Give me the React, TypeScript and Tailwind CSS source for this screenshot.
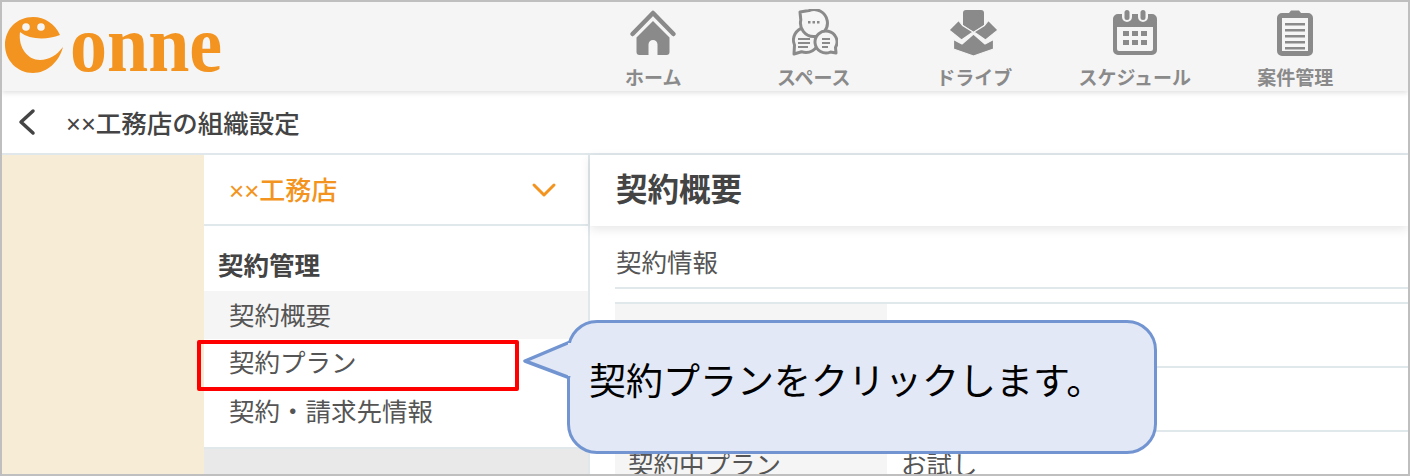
const jp = "font-['Liberation_Sans','Noto_Sans_CJK_JP',sans-serif]";

function HomeIcon() {
  return (
    <svg width="48" height="48" viewBox="0 0 48 48" fill="#8a8a8a">
      <path d="M3.500 25 24 4l20.500 21" fill="none" stroke="#8a8a8a" strokeWidth="4.500" strokeLinecap="round" strokeLinejoin="round" />
      <path d="M24 12 40.500 28.500V43a3 3 0 0 1-3 3H28.500V35.500a4.500 4.500 0 0 0-9 0V46H10.500a3 3 0 0 1-3-3V28.500Z" />
    </svg>
  );
}

function SpaceIcon() {
  return (
    <svg width="48" height="48" viewBox="0 0 48 48" fill="#f5f5f5" stroke="#8a8a8a" strokeWidth="3" strokeLinejoin="round">
      <path d="M4 45 11.500 42.700A12.500 12.500 0 1 0 4.500 36Z" />
      <path d="M10 3 19 1.500A13.500 13.500 0 1 1 10.800 11Z" />
      <path d="M46 44 45.500 38.500A11 11 0 1 0 40.500 43Z" />
      <g stroke="none" fill="#8a8a8a">
        <rect x="18" y="12" width="2.500" height="2.500" />
        <rect x="22.500" y="12" width="2.500" height="2.500" />
        <rect x="27" y="12" width="2.500" height="2.500" />
        <rect x="8" y="29" width="12" height="2" />
        <rect x="8" y="33" width="12" height="2" />
        <rect x="8" y="37" width="10" height="2" />
        <rect x="32" y="29" width="8" height="2" />
        <rect x="32" y="33" width="8" height="2" />
        <rect x="32" y="37" width="6" height="2" />
      </g>
    </svg>
  );
}

function DriveIcon() {
  return (
    <svg width="52" height="48" viewBox="0 0 52 48" fill="#8a8a8a" stroke="#f5f5f5" strokeWidth="1.200" strokeLinejoin="round">
      <path stroke="none" d="M18 1h15a3 3 0 0 1 3 3v12L25.500 23 15 16V4a3 3 0 0 1 3-3Z" />
      <path d="M1 21 10.500 11.500 14.500 16.500 25 23 13.500 31Z" />
      <path d="M50 21 40.500 11.500 36.500 16.500 26 23 37.500 31Z" />
      <path d="M5.500 30.500 14 35 25.500 25 37 35 45.500 30.500V40L25.500 47 5.500 40Z" />
    </svg>
  );
}

function ScheduleIcon() {
  return (
    <svg width="46" height="48" viewBox="0 0 46 48" fill="#8a8a8a">
      <path fillRule="evenodd" d="M6 5h4v3a5 5 0 0 0 10 0V5h6v3a5 5 0 0 0 10 0V5h4a5 5 0 0 1 5 5v31a5 5 0 0 1-5 5H6a5 5 0 0 1-5-5V10a5 5 0 0 1 5-5Zm-1 13v22a2 2 0 0 0 2 2h32a2 2 0 0 0 2-2V18Z" />
      <rect x="12.500" y="1" width="5" height="10" rx="2.500" />
      <rect x="28.500" y="1" width="5" height="10" rx="2.500" />
      <rect x="11" y="22" width="6" height="5" />
      <rect x="20" y="22" width="6" height="5" />
      <rect x="29" y="22" width="6" height="5" />
      <rect x="11" y="31" width="6" height="5" />
      <rect x="20" y="31" width="6" height="5" />
      <rect x="29" y="31" width="6" height="5" />
    </svg>
  );
}

function CaseIcon() {
  return (
    <svg width="38" height="48" viewBox="0 0 38 48" fill="#8a8a8a">
      <path fillRule="evenodd" d="M6 4h7l2-2.500h8L25 4h7a5 5 0 0 1 5 5v33a5 5 0 0 1-5 5H6a5 5 0 0 1-5-5V9a5 5 0 0 1 5-5Zm0 5v33h26V9Z" />
      <rect x="9" y="14" width="20" height="2.500" />
      <rect x="9" y="20" width="20" height="2.500" />
      <rect x="9" y="26" width="20" height="2.500" />
      <rect x="9" y="32" width="20" height="2.500" />
      <rect x="9" y="38" width="20" height="2.500" />
    </svg>
  );
}

const navItems = [
  { label: "ホーム", icon: <HomeIcon /> },
  { label: "スペース", icon: <SpaceIcon /> },
  { label: "ドライブ", icon: <DriveIcon /> },
  { label: "スケジュール", icon: <ScheduleIcon /> },
  { label: "案件管理", icon: <CaseIcon /> },
];

function Logo() {
  return (
    <div className="flex w-[571px] shrink-0 items-start">
      <svg width="68" height="80" viewBox="2 2 68 80" className="shrink-0">
        <path
          d="M33 17C45 17 55 24 60 35 47 40 30 40 20 32 18 48 28 60 40 60 49 60 57 55 63 47 59 62 47 73 33 73 17 73 5 60 5 45 5 29 17 17 33 17Z"
          fill="#f39420"
        />
        <circle cx="26" cy="27" r="3.800" fill="#f5f5f5" />
        <circle cx="41" cy="27" r="3.800" fill="#f5f5f5" />
      </svg>
      <span className="mt-[5px] origin-bottom scale-y-[1.09] font-['Liberation_Serif',serif] text-[74px] leading-[80px] font-bold text-[#f39420]">
        onne
      </span>
    </div>
  );
}

function ContractRow({ label, value }: { label?: string; value?: string }) {
  return (
    <div className="flex h-[64px] border-b-2 border-[#e0e8ec] text-[25.500px] text-[#555]">
      <div className="flex w-[272px] shrink-0 items-center bg-[#f5f5f5] pt-[4px] pl-[13px]">{label}</div>
      <div className="flex flex-1 items-center pt-[4px] pl-[14px]">{value}</div>
    </div>
  );
}

export default function App() {
  return (
    <div className={`relative h-[476px] w-[1410px] overflow-hidden border-2 border-[#bfbfbf] bg-white ${jp}`}>
      <header className="relative z-10 flex h-[89px] bg-[#f5f5f5] shadow-[0_2px_5px_rgba(0,0,0,0.12)]">
        <Logo />
        {navItems.map((item) => (
          <div key={item.label} className="flex w-[160.500px] shrink-0 flex-col items-center pt-[7px]">
            <div className="flex h-[48px] items-center">{item.icon}</div>
            <span className="mt-[10px] text-[19px] leading-[24px] font-bold text-[#8a8a8a]">{item.label}</span>
          </div>
        ))}
      </header>

      <div className="flex h-[64px] items-center border-b-2 border-[#e0e8ec] pl-[15px] text-[#444]">
        <svg width="20" height="28" viewBox="0 0 20 28" fill="none" stroke="#444" strokeWidth="3.500" strokeLinecap="round" strokeLinejoin="round">
          <path d="M16 3 4 14l12 11" />
        </svg>
        <span className="ml-[29px] pt-[5px] text-[25.500px] font-medium">××工務店の組織設定</span>
      </div>

      <div className="flex h-[319px]">
        <div className="w-[202px] shrink-0 bg-[#f7ecd6]" />

        <aside className="flex w-[386px] shrink-0 flex-col border-r-2 border-[#e0e8ec]">
          <div className="flex h-[71px] shrink-0 items-center justify-between border-b-2 border-[#e0e8ec] pr-[31px] pl-[25px]">
            <span className="pt-[3px] text-[26px] font-medium text-[#f39420]">××工務店</span>
            <svg width="26" height="16" viewBox="0 0 26 16" fill="none" stroke="#f39420" strokeWidth="3" strokeLinecap="round" strokeLinejoin="round">
              <path d="M3 3l10 10L23 3" />
            </svg>
          </div>
          <div className="flex h-[65px] shrink-0 items-center pt-[16px] pl-[14px] text-[25.500px] font-bold text-[#444]">契約管理</div>
          <div className="text-[25.500px] text-[#555]">
            <div className="flex h-[48px] items-center bg-[#f5f5f5] pt-[2px] pl-[25px]">契約概要</div>
            <div className="flex h-[48px] items-center pl-[25px]">契約プラン</div>
            <div className="flex h-[48px] items-center pt-[2px] pl-[25px]">契約・請求先情報</div>
          </div>
          <div className="mt-[12px] flex-1 border-t-2 border-[#e0e8ec] bg-[#e9e9e9]" />
        </aside>

        <main className="min-w-0 flex-1">
          <div className="relative flex h-[71px] items-center pl-[26px] text-[31.500px] font-bold text-[#444] shadow-[0_3px_10px_rgba(0,0,0,0.1)]">契約概要</div>
          <div className="pl-[25px]">
            <div className="flex h-[63px] items-center border-b-2 border-[#e0e8ec] pt-[13px] pl-px text-[25.500px] text-[#555]">契約情報</div>
            <div className="mt-[13px] border-t-2 border-[#e0e8ec]">
              <ContractRow />
              <ContractRow />
              <ContractRow label="契約中プラン" value="お試し" />
            </div>
          </div>
        </main>
      </div>

      <div className="absolute top-[338px] left-[195px] h-[51px] w-[322px] rounded-[2px] border-4 border-[#ff0000]" />

      <div className="absolute top-[318px] left-[565px] flex h-[134px] w-[590px] items-center rounded-[30px] border-[3.500px] border-[#7295d2] bg-[#e2e8f5] pb-[8px] pl-[19px] text-[37px] text-black">
        <svg width="50" height="40" viewBox="0 0 50 40" className="absolute top-[16px] left-[-48px]">
          <path d="M48 3 3 22l45 17" fill="#e2e8f5" stroke="#7295d2" strokeWidth="3.500" strokeLinejoin="round" />
          <rect x="46" y="4" width="4" height="33" fill="#e2e8f5" />
        </svg>
        契約プランをクリックします。
      </div>
    </div>
  );
}
